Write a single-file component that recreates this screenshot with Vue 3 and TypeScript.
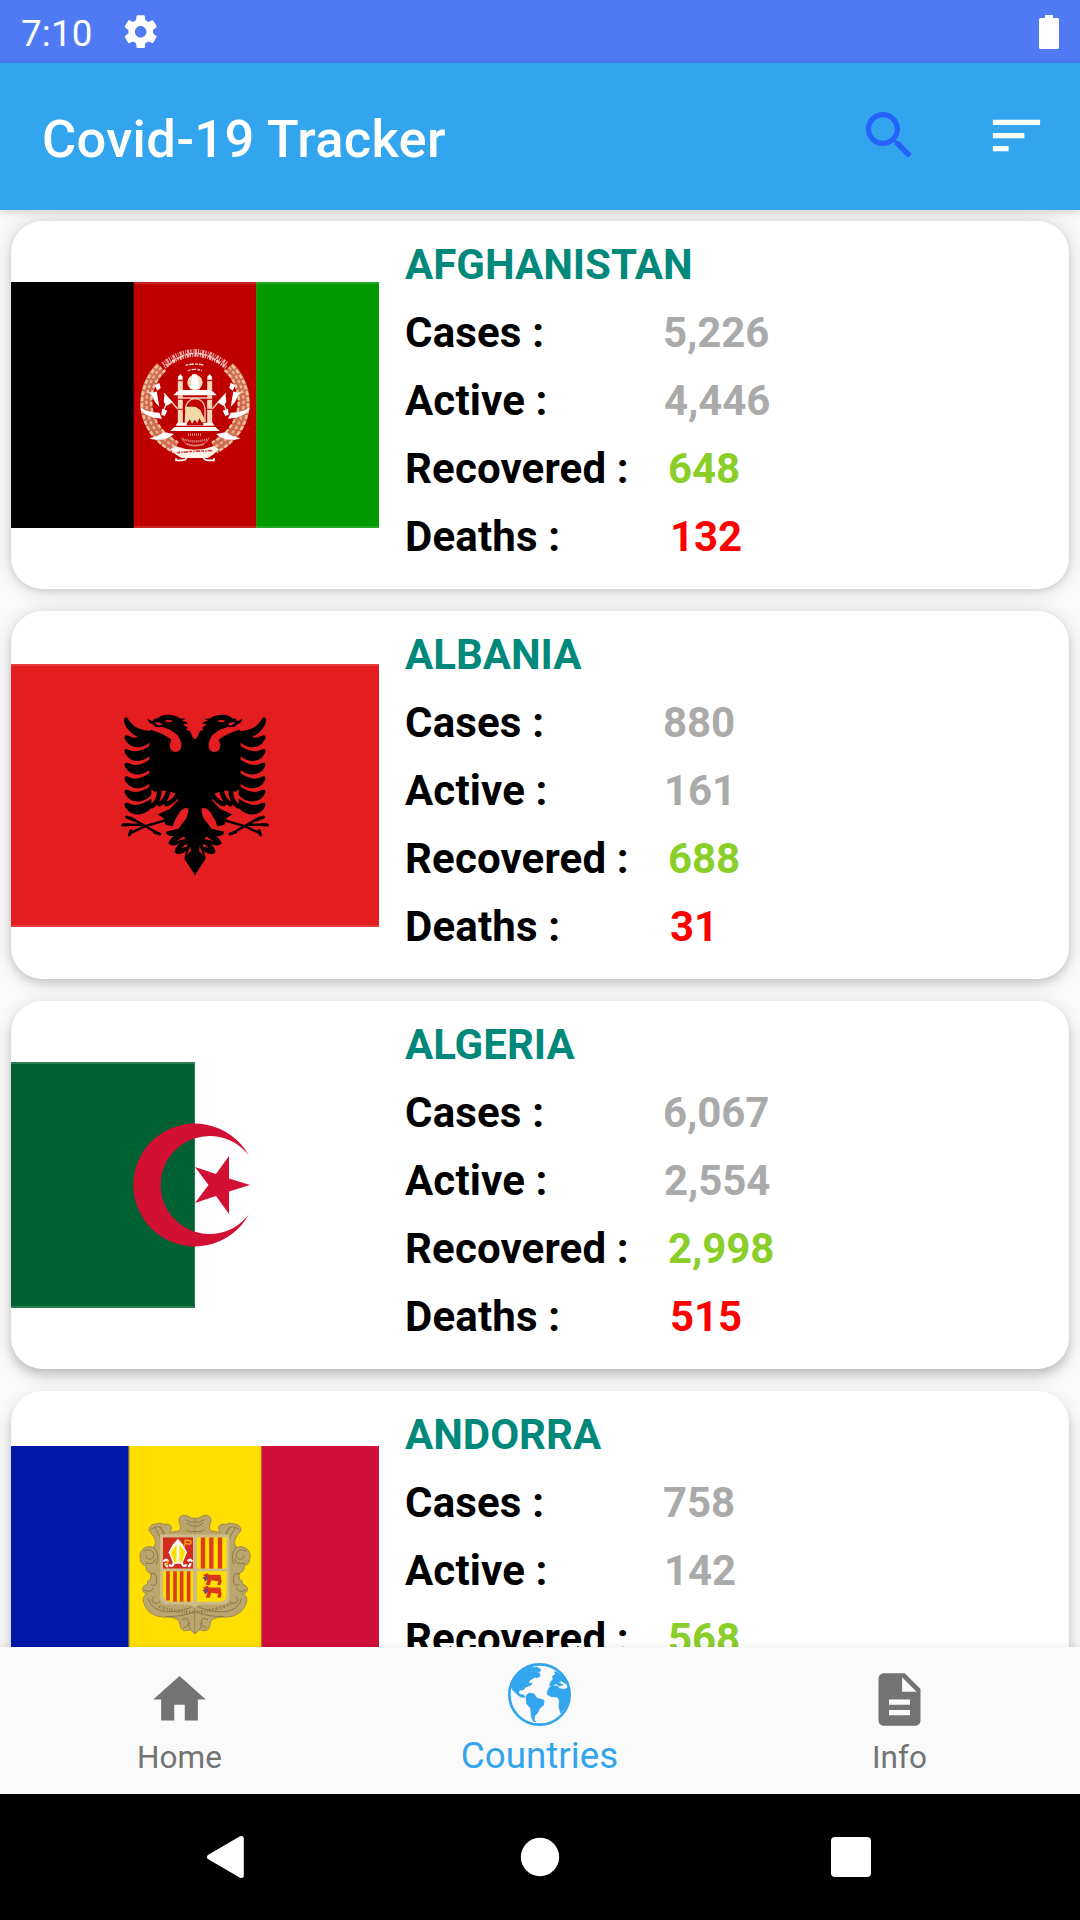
<script setup lang="ts">
interface Country {
  id: string
  name: string
  cases: string
  active: string
  recovered: string
  deaths?: string
}

const countries: Country[] = [
  { id: 'af', name: 'AFGHANISTAN', cases: '5,226', active: '4,446', recovered: '648', deaths: '132' },
  { id: 'al', name: 'ALBANIA', cases: '880', active: '161', recovered: '688', deaths: '31' },
  { id: 'dz', name: 'ALGERIA', cases: '6,067', active: '2,554', recovered: '2,998', deaths: '515' },
  { id: 'ad', name: 'ANDORRA', cases: '758', active: '142', recovered: '568' },
]

const wings = [98, 139, 180, 221, 261, 300]
</script>

<template>
  <div class="screen">
    <div class="status">
      <span class="time">7:10</span>
      <svg class="gear" viewBox="0 0 24 24"><path fill="#fff" d="M19.43 12.98c.04-.32.07-.64.07-.98s-.03-.66-.07-.98l2.11-1.65c.19-.15.24-.42.12-.64l-2-3.46c-.12-.22-.39-.3-.61-.22l-2.49 1c-.52-.4-1.08-.73-1.69-.98l-.38-2.65C14.46 2.18 14.25 2 14 2h-4c-.25 0-.46.18-.49.42l-.38 2.65c-.61.25-1.17.59-1.69.98l-2.49-1c-.23-.09-.49 0-.61.22l-2 3.46c-.13.22-.07.49.12.64l2.11 1.65c-.04.32-.07.65-.07.98s.03.66.07.98l-2.11 1.65c-.19.15-.24.42-.12.64l2 3.46c.12.22.39.3.61.22l2.49-1c.52.4 1.08.73 1.69.98l.38 2.65c.03.24.24.42.49.42h4c.25 0 .46-.18.49-.42l.38-2.65c.61-.25 1.17-.59 1.69-.98l2.49 1c.23.09.49 0 .61-.22l2-3.46c.12-.22.07-.49-.12-.64l-2.11-1.65zM12 15.5c-1.93 0-3.5-1.57-3.5-3.5s1.57-3.5 3.5-3.5 3.5 1.57 3.5 3.5-1.57 3.5-3.5 3.5z" /></svg>
      <svg class="battery" viewBox="0 0 20 34"><path fill="#fff" d="M6 0h8v3h4.500q1.500 0 1.500 1.500v28q0 1.500-1.500 1.500h-17q-1.500 0-1.500-1.500v-28q0-1.500 1.500-1.500H6z" /></svg>
    </div>

    <header class="bar">
      <h1>Covid-19 Tracker</h1>
      <svg class="action search" viewBox="0 0 24 24"><path fill="#2563fb" d="M15.5 14h-.79l-.28-.27C15.41 12.590 16 11.110 16 9.500 16 5.910 13.090 3 9.500 3S3 5.910 3 9.500 5.910 16 9.500 16c1.610 0 3.090-.59 4.230-1.570l.27.28v.79l5 4.990L20.490 19l-4.990-5zm-6 0C7.010 14 5 11.990 5 9.500S7.010 5 9.500 5 14 7.010 14 9.500 11.990 14 9.500 14z" /></svg>
      <svg class="action" viewBox="0 0 24 24"><path fill="#fff" d="M3 18h6v-2H3v2zM3 6v2h18V6H3zm0 7h12v-2H3v2z" /></svg>
    </header>

    <main class="list">
      <article v-for="(c, i) in countries" :key="c.id" class="card" :class="'depth-' + i">
        <div class="flag">
          <svg v-if="c.id === 'af'" width="368" height="246" viewBox="0 0 368 246">
            <path fill="#000" d="M0 0h123v246H0z" />
            <path fill="#bf0000" d="M122.700 0h123v246h-123z" />
            <path fill="#009900" d="M245.300 0H368v246H245.300z" />
            <path fill="#fff" opacity=".14" d="M123 0h245v2H123zM123 244h245v2H123z" />
            <g transform="translate(109 48) scale(.33333)" fill="none">
              <g v-for="s in 2" :key="s" :transform="s === 2 ? 'translate(450 0) scale(-1 1)' : undefined">
                <path stroke="#cf6a50" stroke-width="36" d="M124 112C62 170 52 292 168 352" />
                <path stroke="#f0c3a0" stroke-width="8" stroke-dasharray="13 5" d="M114 106C48 168 38 300 160 366" />
                <path stroke="#eab590" stroke-width="7" stroke-dasharray="10 6" d="M124 112C62 170 54 292 168 352" />
                <path stroke="#f0c3a0" stroke-width="7" stroke-dasharray="12 6" d="M136 120C78 170 70 280 174 338" />
                <path fill="#fff" d="M82 182q14 10 28 2l8 46q-16-14-20-30zM62 232q18 16 56 16l8 18q-44-2-64-26zM88 324q30-4 42-18l32 6q-22 22-66 16zM104 166l14-8 4 16-10 8z" />
                <path stroke="#f6d9c8" stroke-width="4" d="M132 190l44 50M126 255l12-32" />
                <path fill="#fff" d="M134 192l14 14 10 10-18 12-9-12zM126 236l16 6-8 16-10-4z" />
                <path stroke="#f3d9ba" stroke-width="15" d="M181 148v34M181 196v84" />
                <path stroke="#bf0000" stroke-width="3" d="M172 152h18M172 208h18M172 238h18" />
                <path fill="#fff" d="M174 140l7-8 7 8v8h-14z" />
              </g>
              <circle cx="225" cy="157" r="23" fill="#f5dfc2" />
              <path fill="#fff" d="M217 133h14l8 45h-28zM178 180h94l10 10H168zM160 196l12-12h106l12 12z" />
              <path stroke="#f4c8b8" stroke-width="4" d="M188 204h74M196 236q4-28 29-30 27 2 30 30v38" />
              <path fill="#f2d7a7" d="M196 230h30l15 10 17 37h-13l-7-12-6 14-8-10-8 12-6-13-9 12h-7z" />
              <path fill="#fff" d="M172 278h28v8h50v-8h28l5 9H167zM164 291h122l14 12H150z" />
              <path stroke="#f0b8b0" stroke-width="11" stroke-dasharray="3 3 7 2 4 4" d="M134 112Q225 38 318 112" />
              <path stroke="#e9a49e" stroke-width="12" stroke-dasharray="4 4 2 3 7 3" d="M128 102Q225 24 322 102" />
              <path stroke="#f7d7d2" stroke-width="4" stroke-dasharray="8 3 14 4" d="M146 104Q225 36 306 104M197 106q28-8 56 0M204 122q20-8 42 0" />
              <path stroke="#e7a096" stroke-width="7" stroke-dasharray="3 3" d="M204 314h42M188 327q36 14 76 0M200 342q26 10 50 0" />
              <path stroke="#e7a096" stroke-width="2" d="M183 322q10 24 42 25 34-1 43-25" />
              <path fill="#fff2ea" d="M165 348q60 22 118 0l13 10q-20 22-34 26h-76q-22-8-34-26z" />
              <path stroke="#c43c35" stroke-width="5" stroke-dasharray="8 4 4 3 14 3" d="M172 368q52-5 104-6" />
              <path stroke="#fff" stroke-width="5" d="M168 384v7h18q10 0 14-6M282 384v7h-18q-10 0-14-6" />
            </g>
          </svg>

          <svg v-else-if="c.id === 'al'" width="368" height="263" viewBox="0 0 368 263">
            <path fill="#e41e20" d="M0 0h368v263H0z" />
            <path fill="#fff" opacity=".14" d="M0 0h368v2H0zM0 261h368v2H0z" />
            <g transform="translate(99 36.400) scale(.33333)">
              <g v-for="s in 2" :key="s" :transform="s === 2 ? 'translate(510 0) scale(-1 1)' : undefined">
                <path d="M256 119L247 108 240 92 228 88 234 83 220 72 235 68 216 60 228 55 210 54Q196 43 174 43 152 44 142 54L134 54 128 62Q120 61 113 55 114 66 126 71L138 80 158 80 184 90 180 110 122 87 118 130V262L133 274 155 270 175 272 203 282 204 300 180 325 143 342 160 352 166 372 187 378 215 340 236 322 230 352 205 385 167 394Q170 410 194 406 180 413 175 430 188 440 208 430 196 440 193 455 208 470 228 452L223 475 256 525z" />
                <path fill="#e41e20" d="M132 88Q150 78 174 86 207 98 214 128 217 152 198 155 178 154 179 132L184 117 160 102zM226 323Q241 321 231 348 220 373 190 379 187 371 202 347 213 326 226 323zM221 408l-20 14 26-6zM229 430l-16 13 19-5zM241 438l-12 28 14-15z" />
                <ellipse cx="176" cy="62" rx="11" ry="3.500" fill="#e41e20" />
                <path fill="#e41e20" d="M133 65l17 1 7 6-12 4z" />
                <path d="M44 52Q50 46 58 62 78 92 124 92V118Q72 118 46 75 39 60 44 52z" />
                <path v-for="y in wings" :key="y" :d="`M43 ${y + 14}Q43 ${y + 4} 55 ${y + 8}C76 ${y + 20} 98 ${y + 12} 124 ${y - 6}V${y + 22}C102 ${y + 50} 57 ${y + 51} 43 ${y + 14}z`" />
                <g fill="none" stroke="#000" stroke-linecap="round">
                  <path stroke-width="14" d="M148 270Q148 302 126 317M175 274Q166 304 149 311M202 284Q192 304 169 311" />
                  <path stroke-width="7" d="M166 360L104 378 60 399M42 373H98M62 352L104 376 142 398" />
                  <path stroke-width="9" d="M50 350l22 9M38 374l17-1M58 404l5-13M150 401l-17-6" />
                </g>
              </g>
            </g>
          </svg>

          <svg v-else-if="c.id === 'dz'" width="368" height="246" viewBox="0 0 368 246">
            <path fill="#006233" d="M0 0h184v246H0z" />
            <path fill="#fff" opacity=".16" d="M0 0h184v2H0zM0 244h184v2H0zM183 0h1v246h-1z" />
            <path fill="#d21034" d="M237.900 93.700A61.500 61.500 0 1 0 237.900 152.300A49 49 0 1 1 237.900 93.700z" />
            <path fill="#d21034" d="M239 123L218 129.500V152L205 134 184 141 197.500 123 184 105 205 112 218 94V116.500z" />
          </svg>

          <svg v-else width="368" height="258" viewBox="0 0 368 258">
            <path fill="#0018a8" d="M0 0h118v258H0z" />
            <path fill="#fedf00" d="M117.700 0h133v258h-133z" />
            <path fill="#d0103a" d="M250.300 0H368v258H250.300z" />
            <path fill="#8b8058" d="M117.500 0h1v258h-1z" />
            <g transform="translate(109 53.800) scale(.33333)">
              <g v-for="s in 2" :key="s" :transform="s === 2 ? 'translate(450 0) scale(-1 1)' : undefined">
                <path fill="#bba56f" stroke="#a18a50" stroke-width="3" d="M226 56Q210 56 204 49 186 42 178 54 174 62 180 72 184 88 178 93L150 98Q158 86 152 77 140 70 132 74 120 66 106 73 92 72 86 90 96 104 103 114L107 128 102 143Q84 136 70 146 56 160 61 180 64 196 78 197 74 214 94 222L91 241Q82 238 82 254 66 258 68 271 72 284 84 280 66 290 70 306 82 350 132 352 162 350 176 362 180 372 182 384 190 398 210 390L226 402z" />
                <g fill="none" stroke="#8e7845" stroke-width="3">
                  <path d="M225 67q-16 3-28-8M225 80q-15-1-25-11M92 90q20-18 34-1 9 17-8 27M104 84l18 30M119 79l15 24M70 155q22-12 30 5 6 18-12 18-13-1-8-12M76 190q28 6 30-13M101 143q20 20 8 50M90 223q20-9 20 16t-18 15M72 271q23 10 28-7M103 291q-12 7-3 18 13 6 20-4M84 296q12 36 53 40 48 2 88-20M139 350q45 2 86-15M186 360q20-10 20 6t-16 17M211 369q-10 12 2 20M197 90q12 10 28 5" />
                </g>
              </g>
              <path fill="#cdbb8b" d="M120 104h208v190q0 18-20 20h-60q-18 2-24 10-8-8-26-10h-58q-20-2-20-20z" />
              <path fill="#d52b1e" d="M129 113h90v93h-90z" />
              <path fill="#fedf00" d="M231 113h89v93h-89zM129 214h90v92h-70q-20-3-20-22zM231 214h89v70q0 20-20 22h-69z" />
              <path stroke="#dd3c1e" stroke-width="13" d="M249 113v93M274 113v93M300 113v93" />
              <path stroke="#dd3c1e" stroke-width="11" d="M144 214v88M165 214v92M185 214v92M206 214v92" />
              <path fill="#fff" d="M174 117l15 18 12 22-14 35h-27l-14-35 12-22z" />
              <path fill="#fedf00" d="M170 133v55l-7-1-11-30zM178 133v55l8-1 10-30z" />
              <path fill="none" stroke="#fff" stroke-width="7" d="M162 188q-3 16-15 7M185 188q3 16 15 7M145 184q-11-9-13 2M203 184q10-9 13 2M136 190q3 10 8 9M212 190q-3 10-8 9" />
              <path fill="none" stroke="#e6a518" stroke-width="5" d="M137 197q5-3 8-15M193 141q-1-14 9-9 10 4 11-5 0-6-8-4-11-6-11 5" />
              <g v-for="y in [0, 38]" :key="y" :transform="`translate(0 ${y})`">
                <path fill="#db351f" d="M248 226l14-6 5 5h34l4 20-4 11-9-1 3-11-21-3-5 15-12-1 6-16-18-4 10-5z" />
                <path fill="#7b4772" d="M250 232l12-5 2 11-9 8z" />
              </g>
              <path fill="none" stroke="#8f784b" stroke-width="10" stroke-dasharray="3 5 2 3 4 6" d="M118 320Q218 358 334 312" />
            </g>
          </svg>
        </div>

        <div class="info">
          <div class="name">{{ c.name }}</div>
          <div class="row"><span class="label">Cases :</span><span class="value cases">{{ c.cases }}</span></div>
          <div class="row"><span class="label">Active :</span><span class="value active">{{ c.active }}</span></div>
          <div class="row"><span class="label">Recovered :</span><span class="value recovered">{{ c.recovered }}</span></div>
          <div v-if="c.deaths" class="row"><span class="label">Deaths :</span><span class="value deaths">{{ c.deaths }}</span></div>
        </div>
      </article>
    </main>

    <nav class="tabs">
      <div class="tab">
        <svg viewBox="0 0 24 24"><path fill="#737373" d="M10 20v-6h4v6h5v-8h3L12 3 2 12h3v8z" /></svg>
        <span>Home</span>
      </div>
      <div class="tab selected">
        <svg viewBox="54 39 189 189">
          <circle cx="148.500" cy="133.500" r="90.500" fill="none" stroke="#32a5ee" stroke-width="8" />
          <g fill="#32a5ee" stroke="#32a5ee" stroke-width="2.500" stroke-linejoin="round">
            <path d="M66 94Q84 60 113 50l15-2 3 10-9 7 10 6 10-6 8 8-2 8-11-4-7 8-10 4-6 10 12 1-4 6-14 4-9 10-10-1-4 10 8 5 9 2 2 6-11-1-12-8-12-12-8-15z" />
            <path d="M127 55l12-4 13 7-3 8-11-2-6 10-6-5zM138 75l10 2-5 6-9-2z" />
            <path d="M108 137l10-8 14 3 8 12 22 7-1 14-12 10-6 13-9 9-2 13 5 5-7-1-6-15-2-24-12-14z" />
            <path d="M172 125l6-12 10-6 15 2 5 7 16 2 10-5 3 26q-2 27-25 50l-5-19 1-20-6-9-18-1-12-7zM181 98l8-10-1-10 9-5-4-8 9 2 20 16 9 18-8-2-9-7-8 6 13 7-11 3-9-7-7 2-4 6-9-2z" />
          </g>
        </svg>
        <span>Countries</span>
      </div>
      <div class="tab">
        <svg viewBox="0 0 24 24"><path fill="#737373" d="M14 2H6c-1.100 0-1.990.9-1.990 2L4 20c0 1.100.89 2 1.990 2H18c1.100 0 2-.9 2-2V8l-6-6zm2 16H8v-2h8v2zm0-4H8v-2h8v2zm-3-5V3.500L18.500 9H13z" /></svg>
        <span>Info</span>
      </div>
    </nav>

    <div class="system">
      <svg viewBox="0 0 1080 126">
        <path fill="#fff" stroke="#fff" stroke-width="5" stroke-linejoin="round" d="M209.500 63L241.300 44.500v37z" />
        <circle cx="540" cy="63" r="19.200" fill="#fff" />
        <rect x="831" y="43" width="40" height="40" rx="4" fill="#fff" />
      </svg>
    </div>
  </div>
</template>

<style>
body {
  margin: 0;
}
</style>

<style scoped>
.screen {
  width: 1080px;
  height: 1920px;
  display: flex;
  flex-direction: column;
  overflow: hidden;
  background: #fafafa;
  font-family: Roboto, sans-serif;
}
svg {
  display: block;
  flex: none;
}
.status {
  height: 63px;
  flex: none;
  display: flex;
  align-items: center;
  background: #4f7af3;
  padding: 0 21px;
}
.time {
  color: #fff;
  font-size: 36.75px;
  line-height: 43px;
  width: 99.5px;
  padding-top: 3px;
  letter-spacing: 0.2px;
}
.gear {
  width: 39.4px;
  height: 39.4px;
}
.battery {
  width: 20px;
  height: 34px;
  margin-left: auto;
}
.bar {
  height: 147px;
  flex: none;
  display: flex;
  align-items: center;
  background: #32a5ee;
  box-shadow: 0 2px 8px rgba(0, 0, 0, 0.16);
  padding: 0 32px 0 42px;
  position: relative;
  z-index: 1;
}
h1 {
  margin: 0;
  padding-top: 4px;
  flex: 1;
  color: #fff;
  font-size: 52.5px;
  line-height: 62px;
  font-weight: 500;
  letter-spacing: 0.3px;
}
.action {
  width: 63px;
  height: 63px;
  margin-bottom: 2px;
}
.search {
  margin-right: 64px;
}
.list {
  flex: 1;
  min-height: 0;
  overflow: hidden;
  padding: 11px 11px 0;
  display: flex;
  flex-direction: column;
  gap: 22px;
}
.card {
  height: 368px;
  flex: none;
  display: flex;
  background: #fff;
  border-radius: 31.5px;
}
.depth-0 {
  box-shadow: 0 2px 6px rgba(0, 0, 0, 0.12), 0 0 22px rgba(0, 0, 0, 0.14);
}
.depth-1 {
  box-shadow: 0 4px 8px rgba(0, 0, 0, 0.14), 0 2px 22px rgba(0, 0, 0, 0.13);
}
.depth-2 {
  box-shadow: 0 6px 10px rgba(0, 0, 0, 0.16), 0 4px 22px rgba(0, 0, 0, 0.12);
}
.depth-3 {
  box-shadow: 0 8px 10px rgba(0, 0, 0, 0.16), 0 6px 22px rgba(0, 0, 0, 0.12);
}
.flag {
  width: 368px;
  display: flex;
  align-items: center;
}
.info {
  padding: 10px 0 0 26px;
  font-size: 42px;
  font-weight: 700;
  line-height: 68px;
  color: #000;
}
.name {
  color: #00897b;
}
.row {
  display: flex;
}
.label {
  width: 258px;
  white-space: pre;
  letter-spacing: 0.15px;
}
.value {
  letter-spacing: -0.1px;
}
.cases,
.active {
  color: #aaa;
}
.active {
  margin-left: 1px;
}
.recovered {
  color: #8ace2a;
  margin-left: 5px;
}
.deaths {
  color: #f00;
  margin-left: 7px;
}
.tabs {
  height: 147px;
  flex: none;
  display: flex;
  background: #fafafa;
  box-shadow: 0 0 8px rgba(0, 0, 0, 0.09);
  position: relative;
}
.tab {
  flex: 1;
  display: flex;
  flex-direction: column;
  align-items: center;
  padding-top: 21px;
  gap: 8px;
  color: #737373;
  font-size: 31.5px;
  line-height: 37px;
}
.tab svg {
  width: 63px;
  height: 63px;
  margin-right: 2px;
}
.tab span {
  margin-right: 1px;
}
.selected {
  padding-top: 16px;
  color: #32a5ee;
  font-size: 36.75px;
  line-height: 43px;
}
.system {
  height: 126px;
  flex: none;
  background: #000;
}
</style>
